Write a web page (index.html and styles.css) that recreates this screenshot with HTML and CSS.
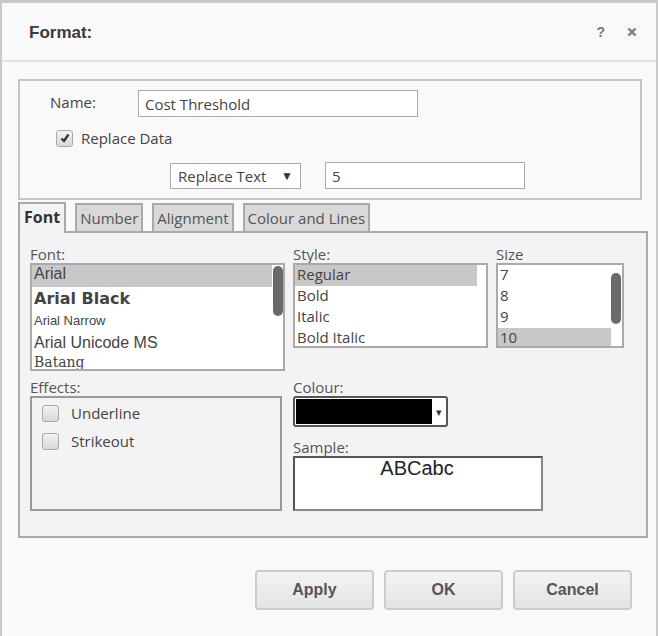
FILE: index.html
```html
<!DOCTYPE html>
<html>

<head>
  <title>Format</title>
  <link rel="stylesheet" href="styles.css">
</head>

<body>
  <div class="dialog">
    <header class="dialog-header">
      <h1>Format:</h1>
      <div class="header-tools">
        <span class="tool">?</span>
        <svg class="close" viewBox="0 0 10 10" width="10" height="10">
          <path d="M1.5 1.5 L8.5 8.5 M8.5 1.5 L1.5 8.5" stroke="#777" stroke-width="2.4" fill="none"/>
        </svg>
      </div>
    </header>

    <main class="dialog-body">
      <section class="name-box">
        <div class="name-row">
          <label class="name-label">Name:</label>
          <input class="text-input name-input" type="text" value="Cost Threshold">
        </div>
        <div class="check-row">
          <span class="check checked">
            <svg viewBox="0 0 12 12" width="12" height="12"><path d="M2.5 6.5 L5 9 L9.5 2.5" fill="none" stroke="#333" stroke-width="2.2"/></svg>
          </span>
          <span>Replace Data</span>
        </div>
        <div class="replace-row">
          <div class="select-box">Replace Text <span class="caret">&#9660;</span></div>
          <input class="text-input value-input" type="text" value="5">
        </div>
      </section>

      <nav class="tabs">
        <span class="tab active">Font</span>
        <span class="tab">Number</span>
        <span class="tab">Alignment</span>
        <span class="tab">Colour and Lines</span>
      </nav>

      <section class="tab-panel">
        <div class="panel-row">
          <div class="field font-field">
            <div class="field-label">Font:</div>
            <div class="list font-list">
              <div class="item sel f-arial">Arial</div>
              <div class="item f-black">Arial Black</div>
              <div class="item f-narrow">Arial Narrow</div>
              <div class="item f-unicode">Arial Unicode MS</div>
              <div class="item f-batang">Batang</div>
              <span class="thumb font-thumb"></span>
            </div>
          </div>
          <div class="field style-field">
            <div class="field-label">Style:</div>
            <div class="list style-list">
              <div class="item sel">Regular</div>
              <div class="item">Bold</div>
              <div class="item">Italic</div>
              <div class="item">Bold Italic</div>
            </div>
          </div>
          <div class="field size-field">
            <div class="field-label">Size</div>
            <div class="list size-list">
              <div class="item">7</div>
              <div class="item">8</div>
              <div class="item">9</div>
              <div class="item sel">10</div>
              <span class="thumb size-thumb"></span>
            </div>
          </div>
        </div>

        <div class="panel-row lower">
          <div class="field font-field">
            <div class="field-label">Effects:</div>
            <div class="effects">
              <div class="effect"><span class="check"></span>Underline</div>
              <div class="effect"><span class="check"></span>Strikeout</div>
            </div>
          </div>
          <div class="field colour-field">
            <div class="field-label">Colour:</div>
            <div class="colour-select">
              <span class="swatch"></span>
              <span class="small-caret">&#9662;</span>
            </div>
            <div class="field-label sample-label">Sample:</div>
            <div class="sample">ABCabc</div>
          </div>
        </div>
      </section>

      <footer class="buttons">
        <button class="btn">Apply</button>
        <button class="btn">OK</button>
        <button class="btn">Cancel</button>
      </footer>
    </main>
  </div>
</body>

</html>
```

FILE: styles.css
```css
body {
    margin: 0;
    background-color: #fff;
    font-family: "Open Sans", sans-serif;
    color: #444;
}

.dialog {
    width: 654px;
    height: 633px;
    border: solid #c9c9c9;
    border-width: 3px 2px 0 2px;
    background-color: #f9f9f9;
}

.dialog-header {
    height: 57px;
    border-bottom: 2px solid #e2e2e2;
    display: flex;
    align-items: center;
    justify-content: space-between;
    padding: 0 19px 0 27px;
}

.dialog-header h1 {
    margin: 0;
    font-family: "Liberation Sans", sans-serif;
    font-size: 17px;
    font-weight: bold;
    color: #3a3a3a;
    padding-top: 3px;
}

.header-tools {
    display: flex;
    gap: 22px;
    align-items: center;
}

.tool {
    font-family: "Liberation Sans", sans-serif;
    font-weight: bold;
    font-size: 14px;
    color: #777;
}

.dialog-body {
    padding: 17px 14px 0 16px;
}

/* name / replace block */
.name-box {
    border: 2px solid #c6c6c6;
    padding: 9px 0 9px 30px;
    font-size: 15px;
}

.name-row {
    display: flex;
    align-items: center;
}

.name-label {
    width: 88px;
    padding-bottom: 4px;
}

.text-input {
    font-family: "Open Sans", sans-serif;
    font-size: 15px;
    color: #444;
    border: 1px solid #aaa;
    background: #fff;
    height: 27px;
    box-sizing: border-box;
    padding: 0 6px;
    margin: 0;
    outline: none;
}

.name-input {
    width: 280px;
}

.check-row {
    display: flex;
    align-items: center;
    gap: 8px;
    margin: 11px 0 0 6px;
}

.check {
    width: 17px;
    height: 17px;
    box-sizing: border-box;
    border: 1px solid #aaa;
    border-radius: 3px;
    background: linear-gradient(#f2f2f2, #d8d8d8);
    display: inline-flex;
    align-items: center;
    justify-content: center;
}

.replace-row {
    display: flex;
    align-items: center;
    margin: 14px 0 0 120px;
    gap: 24px;
}

.select-box {
    width: 131px;
    height: 26px;
    box-sizing: border-box;
    border: 1px solid #aaa;
    background: #fff;
    padding: 0 7px;
    display: flex;
    align-items: center;
    justify-content: space-between;
}

.caret {
    font-size: 12px;
    color: #333;
}

.value-input {
    width: 200px;
}

/* tabs */
.tabs {
    display: flex;
    gap: 9px;
    margin-top: 2px;
    height: 29px;
    align-items: flex-end;
}

.tab {
    height: 28px;
    box-sizing: border-box;
    border: 2px solid #a9a9a9;
    border-bottom: none;
    background-color: #d9d9d9;
    padding: 0 3px;
    font-size: 15px;
    line-height: 26px;
    color: #555;
}

.tab.active {
    height: 31px;
    margin-bottom: -2px;
    padding: 0 4px;
    font-size: 16px;
    background-color: #f4f3f4;
    font-weight: bold;
    color: #333;
    position: relative;
}

/* font panel */
.tab-panel {
    width: 610px;
    height: 291px;
    border: 2px solid #aaa;
    background-color: #f4f3f4;
    padding: 12px 6px 0 10px;
    margin-right: 10px;
}

.panel-row {
    display: flex;
    gap: 8px;
}

.panel-row.lower {
    margin-top: 7px;
}

.field-label {
    font-size: 15px;
    line-height: 18px;
    color: #555;
}

.font-field {
    width: 255px;
}

.list {
    position: relative;
    border: 2px solid #aaa;
    background: #fff;
    box-sizing: border-box;
    overflow: hidden;
    font-size: 15px;
    color: #444;
}

.item {
    padding-left: 2px;
    white-space: nowrap;
}

.item.sel {
    background-color: #c8c8c8;
}

.font-list {
    height: 108px;
    font-family: "Liberation Sans", Arial, sans-serif;
}

.font-list .item.sel {
    margin-right: 11px;
}

.f-arial {
    height: 22px;
    line-height: 17px;
    font-size: 16px;
}

.f-black {
    height: 24px;
    line-height: 23px;
    font-size: 16px;
    font-family: "DejaVu Sans", sans-serif;
    font-weight: bold;
}

.f-narrow {
    height: 21px;
    line-height: 20px;
    font-size: 13px;
    font-family: "Liberation Sans Narrow", "Liberation Sans", sans-serif;
}

.f-unicode {
    height: 22px;
    line-height: 21px;
    font-size: 16px;
}

.f-batang {
    height: 20px;
    line-height: 17px;
    font-size: 14px;
    font-family: "DejaVu Serif", serif;
}

.thumb {
    position: absolute;
    width: 10px;
    border-radius: 5px;
    background-color: #6a6a6a;
}

.font-thumb {
    right: 0;
    top: 1px;
    height: 50px;
}

.style-field .list {
    width: 195px;
    height: 85px;
}

.style-list .item,
.size-list .item {
    height: 21px;
    line-height: 19px;
}

.style-list .item.sel {
    margin-right: 9px;
}

.size-list {
    width: 128px;
    height: 85px;
}

.size-list .item.sel {
    margin-right: 11px;
}

.size-thumb {
    right: 1px;
    top: 8px;
    height: 51px;
}

.effects {
    height: 115px;
    box-sizing: border-box;
    width: 252px;
    border: 2px solid #999;
    padding: 1px 0 0 10px;
    font-size: 15px;
    color: #444;
}

.effect {
    display: flex;
    align-items: center;
    gap: 12px;
    height: 28px;
}

.colour-select {
    width: 155px;
    height: 31px;
    box-sizing: border-box;
    border: 2px solid #555;
    border-radius: 3px;
    background: #fff;
    display: flex;
    align-items: center;
    padding-left: 1px;
}

.swatch {
    width: 136px;
    height: 25px;
    background: #000;
}

.small-caret {
    font-size: 11px;
    color: #333;
    margin-left: 4px;
}

.sample-label {
    margin-top: 11px;
}

.sample {
    width: 250px;
    height: 55px;
    box-sizing: border-box;
    border: 2px solid;
    border-color: #555 #888 #888 #555;
    background: #fff;
    text-align: center;
    font-family: "Liberation Sans", Arial, sans-serif;
    font-size: 20px;
    color: #222;
    line-height: 20px;
    padding-right: 2px;
}

/* footer buttons */
.buttons {
    display: flex;
    justify-content: flex-end;
    gap: 10px;
    margin: 32px 10px 0 0;
}

.btn {
    width: 119px;
    height: 40px;
    border: 2px solid #ccc;
    border-radius: 4px;
    background: linear-gradient(#f3f3f3, #e4e4e4);
    font-family: "Liberation Sans", sans-serif;
    font-weight: bold;
    font-size: 16px;
    color: #555;
}
```
